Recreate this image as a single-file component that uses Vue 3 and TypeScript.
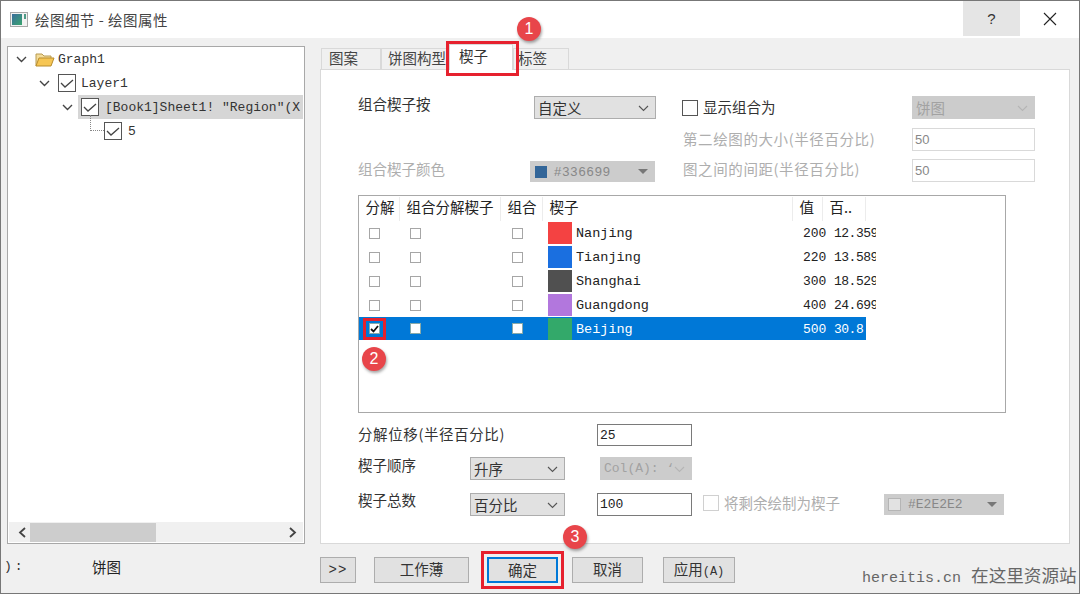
<script setup lang="ts">
interface Slice { name: string; color: string; value: number; pct: string; selected?: boolean }
const slices: Slice[] = [
  { name: 'Nanjing', color: '#f44242', value: 200, pct: '12.359' },
  { name: 'Tianjing', color: '#1a6fe0', value: 220, pct: '13.589' },
  { name: 'Shanghai', color: '#505050', value: 300, pct: '18.529' },
  { name: 'Guangdong', color: '#b277dd', value: 400, pct: '24.699' },
  { name: 'Beijing', color: '#33a96a', value: 500, pct: '30.8', selected: true },
]
const headers = ['分解', '组合分解楔子', '组合', '楔子', '值', '百..']
</script>

<template>
  <div class="window">
    <header class="titlebar">
      <svg class="app-icon" width="18" height="15" viewBox="0 0 18 15">
        <defs>
          <linearGradient id="appfill" x1="0" y1="0" x2="1" y2="1">
            <stop offset="0" stop-color="#3a6d9c" />
            <stop offset="1" stop-color="#3aa56f" />
          </linearGradient>
        </defs>
        <rect x="0.5" y="0.5" width="17" height="14" fill="#f2f2f2" stroke="#a8a8a8" />
        <rect x="2" y="2" width="10" height="11" fill="url(#appfill)" />
        <rect x="14" y="2" width="2" height="5" fill="#4f9a86" />
      </svg>
      <span class="title">绘图细节 - 绘图属性</span>
      <button class="help">?</button>
      <button class="close">
        <svg width="14" height="14" viewBox="0 0 14 14"><path d="M1 1l12 12M13 1L1 13" stroke="#222" stroke-width="1.1" fill="none" /></svg>
      </button>
    </header>

    <main class="body">
      <section class="left">
        <div class="tree">
          <div class="tree-rows">
            <div class="node lv0">
              <svg class="chev" width="11" height="7" viewBox="0 0 11 7"><path d="M1 1l4.5 4.5L10 1" stroke="#444" stroke-width="1.4" fill="none" /></svg>
              <svg class="folder" width="20" height="17" viewBox="0 0 20 17">
                <path d="M1 15V3h6l2 2h7v3" fill="#f3dc9a" stroke="#b89a50" />
                <path d="M1 15l3-8h15l-3 8z" fill="#f6c654" stroke="#b98d2c" />
              </svg>
              <span class="mono">Graph1</span>
            </div>
            <div class="node lv1">
              <svg class="chev" width="11" height="7" viewBox="0 0 11 7"><path d="M1 1l4.5 4.5L10 1" stroke="#444" stroke-width="1.4" fill="none" /></svg>
              <span class="tree-check"><svg width="14" height="10" viewBox="0 0 14 10"><path d="M1 5l4 4 8-7" stroke="#444" stroke-width="1.3" fill="none" /></svg></span>
              <span class="mono">Layer1</span>
            </div>
            <div class="node lv2">
              <svg class="chev" width="11" height="7" viewBox="0 0 11 7"><path d="M1 1l4.5 4.5L10 1" stroke="#444" stroke-width="1.4" fill="none" /></svg>
              <div class="hl">
                <span class="tree-check"><svg width="14" height="10" viewBox="0 0 14 10"><path d="M1 5l4 4 8-7" stroke="#444" stroke-width="1.3" fill="none" /></svg></span>
                <span class="mono clip">[Book1]Sheet1! "Region"(X</span>
              </div>
            </div>
            <div class="node lv3">
              <span class="dots"></span>
              <span class="tree-check"><svg width="14" height="10" viewBox="0 0 14 10"><path d="M1 5l4 4 8-7" stroke="#444" stroke-width="1.3" fill="none" /></svg></span>
              <span class="mono">5</span>
            </div>
          </div>
          <div class="hscroll">
            <svg width="9" height="11" viewBox="0 0 9 11"><path d="M7 1L2 5.5 7 10" stroke="#444" stroke-width="1.8" fill="none" /></svg>
            <span class="thumb"></span>
            <svg class="right-arrow" width="9" height="11" viewBox="0 0 9 11"><path d="M2 1l5 4.5L2 10" stroke="#444" stroke-width="1.8" fill="none" /></svg>
          </div>
        </div>
        <div class="status">
          <span class="status-label mono">):</span>
          <span class="status-value">饼图</span>
        </div>
      </section>

      <section class="right">
        <nav class="tabs">
          <span class="tab t1">图案</span>
          <span class="tab t2">饼图构型</span>
          <span class="tab t3">楔子</span>
          <span class="tab t4">标签</span>
        </nav>
        <div class="panel">
          <div class="top">
            <div class="top-left">
              <div class="row r-group">
                <label class="lab w176">组合楔子按</label>
                <div class="select s122">自定义
                  <svg class="caret" width="11" height="7" viewBox="0 0 11 7"><path d="M1 1l4.5 4.5L10 1" stroke="#555" stroke-width="1.1" fill="none" /></svg>
                </div>
              </div>
              <div class="row r-color">
                <label class="lab off w172">组合楔子颜色</label>
                <div class="colorsel cs125">
                  <span class="sw sw-blue"></span><span class="hex">#336699</span><span class="tri"></span>
                </div>
              </div>
            </div>
            <div class="top-right">
              <div class="row">
                <span class="box"></span>
                <label class="lab show">显示组合为</label>
                <div class="select dis s123">饼图
                  <svg class="caret" width="11" height="7" viewBox="0 0 11 7"><path d="M1 1l4.5 4.5L10 1" stroke="#b5b5b5" stroke-width="1.1" fill="none" /></svg>
                </div>
              </div>
              <div class="row r-size">
                <label class="lab off w230 wide">第二绘图的大小(半径百分比)</label>
                <div class="input off-input">50</div>
              </div>
              <div class="row r-gap">
                <label class="lab off w230 wide">图之间的间距(半径百分比)</label>
                <div class="input off-input">50</div>
              </div>
            </div>
          </div>

          <div class="table">
            <div class="thead">
              <span v-for="h in headers" :key="h" class="th">{{ h }}</span>
            </div>
            <div v-for="s in slices" :key="s.name" class="tr" :class="{ sel: s.selected }">
              <span class="td"><i class="cb" :class="{ on: s.selected }">
                <svg v-if="s.selected" width="9" height="8" viewBox="0 0 9 8"><path d="M1 4l2.5 2.5L8 1" stroke="#111" stroke-width="1.8" fill="none" /></svg>
              </i></span>
              <span class="td"><i class="cb"></i></span>
              <span class="td"><i class="cb cb-third"></i></span>
              <span class="td slice">
                <b class="swatch" :style="{ background: s.color }"></b>
                <span class="mono name">{{ s.name }}</span>
              </span>
              <span class="td mono val">{{ s.value }}</span>
              <span class="td mono pct">{{ s.pct }}</span>
            </div>
          </div>

          <div class="bottom">
            <div class="row b1">
              <label class="lab w239 wide">分解位移(半径百分比)</label>
              <div class="input w95">25</div>
            </div>
            <div class="row b2">
              <label class="lab w112">楔子顺序</label>
              <div class="select s95">升序
                <svg class="caret" width="11" height="7" viewBox="0 0 11 7"><path d="M1 1l4.5 4.5L10 1" stroke="#555" stroke-width="1.1" fill="none" /></svg>
              </div>
              <div class="select dis s92 mono-sel">Col(A): ‘
                <svg class="caret" width="11" height="7" viewBox="0 0 11 7"><path d="M1 1l4.5 4.5L10 1" stroke="#b5b5b5" stroke-width="1.1" fill="none" /></svg>
              </div>
            </div>
            <div class="row b3">
              <label class="lab w112">楔子总数</label>
              <div class="select s95">百分比
                <svg class="caret" width="11" height="7" viewBox="0 0 11 7"><path d="M1 1l4.5 4.5L10 1" stroke="#555" stroke-width="1.1" fill="none" /></svg>
              </div>
              <div class="input w95 ml32">100</div>
              <span class="box off-box"></span>
              <label class="lab off rest">将剩余绘制为楔子</label>
              <div class="colorsel cs120">
                <span class="sw sw-grey"></span><span class="hex mono-hex">#E2E2E2</span><span class="tri"></span>
              </div>
            </div>
          </div>
        </div>
        <div class="buttons">
          <button class="btn b-more">&gt;&gt;</button>
          <button class="btn b-book">工作薄</button>
          <button class="btn b-ok">确定</button>
          <button class="btn b-cancel">取消</button>
          <button class="btn b-apply">应用<span class="mono small">(A)</span></button>
          <span class="watermark"><span class="wm-latin">hereitis.cn</span>在这里资源站</span>
        </div>
      </section>
    </main>

    <i class="mark mark-tab"></i>
    <i class="mark mark-check"></i>
    <i class="mark mark-ok"></i>
    <span class="badge badge-1">1</span>
    <span class="badge badge-2">2</span>
    <span class="badge badge-3">3</span>
  </div>
</template>

<style>
html, body { margin: 0; background: #f0f0f0; }
</style>

<style scoped>
* { box-sizing: border-box; }
.window {
  position: relative;
  width: 1080px;
  height: 594px;
  border: 1px solid #777;
  background: #f0f0f0;
  overflow: hidden;
  font-family: "Noto Sans CJK SC", "Liberation Sans", sans-serif;
  font-size: 14.5px;
  color: #333;
  display: flex;
  flex-direction: column;
}
.mono { font-family: "Liberation Mono", "Noto Sans CJK SC", monospace; font-size: 13px; }

.titlebar { height: 37px; background: #fff; display: flex; align-items: center; flex: none; }
.app-icon { margin-left: 9px; }
.title { margin-left: 7px; font-size: 14.5px; color: #444; letter-spacing: 0.5px; }
.help {
  margin-left: auto; width: 57px; height: 35px; margin-top: -2px;
  border: 0; background: #e5e5e5; font: 15px "Liberation Sans", sans-serif; color: #333;
}
.close { width: 59px; height: 35px; margin-top: -2px; border: 0; background: #fff; display: flex; align-items: center; justify-content: center; }

.body { flex: 1; display: flex; padding: 8px 9px 0 6px; min-height: 0; }

.left { width: 298px; flex: none; display: flex; flex-direction: column; }
.tree {
  height: 498px; background: #fff; border: 1px solid #a8a8a8;
  display: flex; flex-direction: column;
}
.tree-rows { flex: 1; padding-top: 1px; }
.node { height: 24px; display: flex; align-items: center; position: relative; }
.lv0 { padding-left: 8px; height: 23px; }
.lv1 { padding-left: 31px; }
.lv2 { padding-left: 54px; }
.lv3 { padding-left: 96px; }
.chev { flex: none; }
.folder { margin-left: 8px; margin-right: 3px; }
.lv1 .tree-check { margin-left: 8px; margin-right: 5px; }
.hl {
  flex: 1; height: 24px; margin-left: 5px; background: #d6d6d6;
  display: flex; align-items: center; padding-left: 3px; margin-right: 1px; overflow: hidden;
}
.hl .tree-check { margin-right: 6px; }
.clip { white-space: pre; }
.tree-check {
  width: 18px; height: 18px; border: 1px solid #555; background: #fff; flex: none;
  display: flex; align-items: center; justify-content: center;
}
.lv3 .tree-check { margin-right: 6px; }
.dots {
  position: absolute; left: 82px; top: -4px; width: 14px; height: 16px;
  border-left: 1px dotted #888; border-bottom: 1px dotted #888;
}
.hscroll { height: 20px; background: #f0f0f0; display: flex; align-items: center; padding-left: 9px; margin: 0 1px 1px; }
.thumb { width: 126px; height: 19px; background: #cdcdcd; margin-left: 3px; }
.right-arrow { margin-left: auto; margin-right: 6px; }
.status { height: 24px; margin-top: 10px; margin-left: -6px; display: flex; align-items: center; font-size: 14.5px; }
.status-label { width: 91px; padding-left: 3px; flex: none; letter-spacing: 3px; }
.status-value { color: #222; }

.right { margin-left: 15px; width: 750px; flex: none; display: flex; flex-direction: column; }
.tabs { height: 23px; display: flex; align-items: flex-end; flex: none; position: relative; z-index: 1; }
.tab {
  height: 21px; border: 1px solid #d9d9d9; border-bottom: 0; background: #f0f0f0;
  display: flex; align-items: center; padding-left: 7px; padding-bottom: 3px; font-size: 14.5px; color: #444;
}
.t1 { width: 60px; margin-left: 1px; }
.t2 { width: 69px; padding-left: 6px; }
.t3 { width: 64px; height: 26px; background: #fff; margin-left: -1px; padding-left: 9px; padding-bottom: 4px; margin-bottom: -1px; border-color: #d9d9d9; color: #333; position: relative; }
.t4 { width: 56px; padding-left: 4px; }

.panel { height: 475px; background: #fff; border: 1px solid #d9d9d9; padding-left: 37px; flex: none; }
.row { display: flex; align-items: center; height: 23px; }
.lab { flex: none; white-space: nowrap; color: #333; }
.off { color: #aeaeae; }
.wide { letter-spacing: 0.6px; }
.w176 { width: 176px; }
.w172 { width: 172px; }
.w230 { width: 230px; padding-left: 1px; }
.w239 { width: 239px; }
.w112 { width: 112px; }

.top { display: flex; height: 113px; flex: none; }
.top-left { width: 324px; flex: none; }
.r-group { margin-top: 26px; }
.r-group .lab { margin-top: -8px; }
.r-color { margin-top: 42px; height: 21px; }
.r-color .lab { margin-top: -7px; }
.top-right { padding-top: 26px; display: flex; flex-direction: column; gap: 9px; }
.show { width: 209px; margin-left: 5px; margin-top: -2px; }
.r-size .lab { margin-top: -2px; }
.r-gap { margin-top: -1px; }
.r-gap .lab { margin-top: -4px; }

.select {
  height: 23px; background: #e1e1e1; border: 1px solid #adadad; position: relative;
  display: flex; align-items: center; padding-left: 3px; font-size: 14.5px; color: #333; flex: none; white-space: pre; overflow: hidden;
}
.caret { position: absolute; right: 6px; top: 8px; }
.dis { background: #cccccc; border-color: #cccccc; color: #a2a2a2; }
.s122 { width: 122px; }
.s123 { width: 123px; }
.s95 { width: 95px; }
.s92 { width: 92px; margin-left: 35px; }
.mono-sel { font-family: "Liberation Mono", monospace; font-size: 13px; }

.colorsel {
  height: 21px; background: #cccccc; display: flex; align-items: center; position: relative; flex: none;
  padding-left: 4px;
}
.cs125 { width: 125px; padding-left: 5px; }
.cs120 { width: 120px; margin-left: 42px; }
.sw { width: 12px; height: 12px; margin-right: 7px; flex: none; }
.sw-blue { background: #336699; }
.sw-grey { background: #e2e2e2; border: 1px solid #b5b5b5; width: 13px; height: 13px; }
.hex { font-family: "Liberation Sans", sans-serif; font-size: 13px; color: #888; letter-spacing: 0.9px; }
.mono-hex { font-family: "Liberation Mono", monospace; letter-spacing: 0; }
.tri {
  position: absolute; right: 7px; top: 8px; width: 0; height: 0;
  border-left: 5px solid transparent; border-right: 5px solid transparent; border-top: 5px solid #777;
}

.input {
  height: 23px; border: 1px solid #7a7a7a; background: #fff; padding-left: 2px;
  display: flex; align-items: center; font: 13px "Liberation Mono", monospace; color: #222; flex: none;
}
.off-input { width: 123px; border-color: #d9d9d9; color: #888; font-family: "Liberation Sans", sans-serif; }
.w95 { width: 95px; }
.ml32 { margin-left: 32px; }

.box { width: 16px; height: 16px; border: 1px solid #555; background: #fff; flex: none; }
.off-box { margin-left: 11px; border-color: #d0d0d0; }
.rest { margin-left: 5px; width: 118px; }

.table { height: 218px; width: 648px; border: 1px solid #a8a8a8; padding-top: 1px; margin-top: 12px; }
.thead { display: grid; grid-template-columns: 41px 101px 42px 250px 30px 43px; width: 507px; height: 24px; }
.th {
  border-right: 1px solid #ececec; padding-left: 6.5px; line-height: 20px; font-size: 14.5px; color: #222; white-space: nowrap;
}
.tr { display: grid; grid-template-columns: 41px 101px 42px 250px 34px 49px; height: 24px; width: 517px; align-items: center; color: #222; overflow: hidden; }
.tr.sel { background: #0078d7; color: #fff; width: 507px; height: 23px; margin-top: 0; }
.td { display: flex; align-items: center; height: 100%; overflow: hidden; white-space: pre; }
.cb {
  display: flex; align-items: center; justify-content: center;
  width: 11px; height: 11px; border: 1px solid #a6a6a6; background: #fff; margin-left: 10px;
}
.cb-third { margin-left: 11px; }
.tr.sel .cb { border-color: #8aa; }
.cb.on { border-color: #555; }
.slice { padding-left: 5px; }
.swatch { width: 24px; height: 22px; flex: none; }
.name { margin-left: 4px; font-size: 13.5px; padding-top: 1px; }
.val { padding-left: 10px; padding-top: 1px; }
.pct { padding-left: 7px; padding-top: 1px; letter-spacing: -0.5px; }

.bottom { margin-top: 11px; }
.b1 { height: 22px; }
.b1 .input { height: 22px; }
.b1 .lab { margin-top: -4px; }
.b2 { margin-top: 11px; }
.b2 .lab { margin-top: -9px; }
.b3 { margin-top: 13px; }
.b3 .lab { margin-top: -10px; }
.b3 .rest { margin-top: -4px; }
.b3 .off-box { margin-top: -4px; }

.buttons { display: flex; align-items: flex-start; padding-top: 13px; flex: 1; position: relative; }
.btn {
  height: 26px; background: #e1e1e1; border: 1px solid #adadad; font: inherit; color: #333; padding: 0 0 3px; flex: none;
}
.b-more { width: 36px; font: 14px "Liberation Mono", monospace; letter-spacing: 1px; padding: 0; }
.b-book { width: 95px; margin-left: 18px; }
.b-ok { width: 71px; margin-left: 18px; border: 2px solid #0078d7; }
.b-cancel { width: 71px; margin-left: 14px; }
.b-apply { width: 72px; margin-left: 20px; }
.small { font-size: 12px; }
.watermark { margin-left: 127px; margin-top: 7px; font-size: 17.6px; color: #666; white-space: nowrap; line-height: 22px; flex: none; }
.wm-latin { font-family: "Liberation Mono", monospace; font-size: 15px; margin-right: 10px; }

.mark { position: absolute; border: 3px solid #e6212e; pointer-events: none; z-index: 3; }
.mark-tab { left: 445px; top: 40px; width: 73px; height: 35px; }
.mark-check { left: 362px; top: 317px; width: 23px; height: 22px; }
.mark-ok { left: 480px; top: 550px; width: 83px; height: 38px; }
.badge {
  position: absolute; width: 24px; height: 24px; border-radius: 50%; background: #e8454a; color: #fff; z-index: 4;
  display: flex; align-items: center; justify-content: center; font: 16px "Liberation Sans", sans-serif;
  box-shadow: 1px 2px 3px rgba(0, 0, 0, 0.35);
}
.badge-1 { left: 516px; top: 16px; }
.badge-2 { left: 361px; top: 346px; }
.badge-3 { left: 562px; top: 524px; }
</style>
